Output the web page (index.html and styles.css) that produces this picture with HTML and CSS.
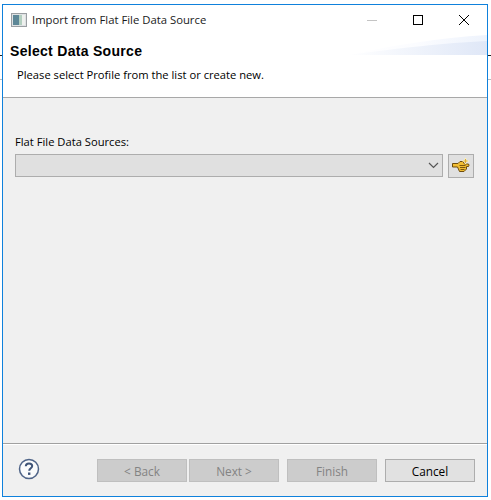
FILE: index.html
```html
<!DOCTYPE html>
<html lang="en">
<head>
<meta charset="utf-8">
<title>Import from Flat File Data Source</title>
<link rel="stylesheet" href="styles.css">
</head>
<body>
<span class="stub stub-dark stub-left"></span>
<span class="stub stub-gray stub-left"></span>
<span class="stub stub-dark stub-right"></span>
<span class="stub stub-gray stub-right"></span>
<div class="window">
  <div class="titlebar">
    <svg class="app-icon" width="16" height="14" viewBox="0 0 16 14">
      <rect x="0.5" y="0.5" width="15" height="13" fill="#dfe2e4" stroke="#9a9ea2"/>
      <rect x="2" y="2" width="6" height="10" fill="#5d8797"/>
      <rect x="8" y="2" width="3" height="10" fill="#b3cfc0"/>
      <rect x="11" y="2" width="3" height="10" fill="#eef0ee"/>
    </svg>
    <span class="title">Import from Flat File Data Source</span>
    <div class="controls">
      <span class="ctl"><svg width="12" height="12" viewBox="0 0 12 12"><path d="M1 6.5H11" stroke="#c4c4c4" fill="none"/></svg></span>
      <span class="ctl"><svg width="12" height="12" viewBox="0 0 12 12"><rect x="1.5" y="1.5" width="9" height="9" stroke="#000" fill="none"/></svg></span>
      <span class="ctl"><svg width="12" height="12" viewBox="0 0 12 12"><path d="M1 1L11 11M11 1L1 11" stroke="#000" fill="none"/></svg></span>
    </div>
  </div>
  <div class="banner">
    <svg class="banner-art" width="140" height="20" viewBox="0 0 140 20">
      <defs>
        <linearGradient id="bg" x1="0" y1="0" x2="1" y2="0">
          <stop offset="0" stop-color="#fff"/>
          <stop offset="1" stop-color="#dfe7f7"/>
        </linearGradient>
        <linearGradient id="bg2" x1="0" y1="0" x2="1" y2="0">
          <stop offset="0" stop-color="#fff"/>
          <stop offset="0.5" stop-color="#fbfcff"/>
          <stop offset="1" stop-color="#eef3fc"/>
        </linearGradient>
      </defs>
      <path d="M0 20C50 10 90 3 140 0V20Z" fill="url(#bg2)"/>
      <path d="M0 20C55 13 95 8 140 6V20Z" fill="url(#bg)"/>
    </svg>
    <h1 class="heading">Select Data Source</h1>
    <p class="desc">Please select Profile from the list or create new.</p>
  </div>
  <div class="content">
    <label class="field-label">Flat File Data Sources:</label>
    <div class="field-row">
      <div class="combo">
        <svg width="11" height="7" viewBox="0 0 11 7"><path d="M1 1L5.5 5.5L10 1" stroke="#555" stroke-width="1.2" fill="none"/></svg>
      </div>
      <button class="pick" type="button" aria-label="Create new">
        <svg width="18" height="16" viewBox="0 0 18 16">
          <path d="M0.500 5.500H6L8 3.500H11L12.500 6H16.500Q17.500 7 16.500 8.500H14.500V11L12 13.500H7.500L5.500 9H0.500Z" fill="#f1bd33" stroke="#6e4c0c"/>
          <path d="M7.500 7.500H13.500M8 9.500H13.500M8.500 11.500H12.500" stroke="#7c570f" fill="none"/>
          <path d="M13.500 0V6M10.500 3H16.500" stroke="#fff3b8" stroke-width="1.500"/>
          <path d="M13.500 1V5M11.500 3H15.500" stroke="#dfae35"/>
        </svg>
      </button>
    </div>
  </div>
  <div class="footer">
    <svg class="help" width="22" height="22" viewBox="0 0 22 22">
      <circle cx="11" cy="11" r="9.500" fill="#fafbfc" stroke="#4f6488" stroke-width="1.500"/>
      <path d="M7.800 8.300C7.800 6.300 9.300 5.500 11 5.500C12.800 5.500 14.200 6.500 14.200 8.100C14.200 10.300 11.200 10.300 11.200 12.800" stroke="#3f5478" stroke-width="2" fill="none"/>
      <rect x="10" y="14.500" width="2.400" height="2.400" fill="#3f5478"/>
    </svg>
    <div class="buttons">
      <button class="btn" type="button" disabled>&lt; Back</button>
      <button class="btn" type="button" disabled>Next &gt;</button>
      <button class="btn btn-finish" type="button" disabled>Finish</button>
      <button class="btn btn-cancel" type="button">Cancel</button>
    </div>
  </div>
</div>
</body>
</html>
```
FILE: styles.css
```css
* { box-sizing: border-box; }
html, body { margin: 0; height: 100%; background: #fff; }
body {
  padding: 4px 0 0 2px;
  overflow: hidden;
  position: relative;
  font-family: "Open Sans", "Noto Sans", sans-serif;
  font-size: 12px;
  color: #000;
}
.stub { position: absolute; height: 1px; width: 2px; }
.stub-dark { top: 55px; background: #222; }
.stub-gray { top: 79px; background: #bbb; }
.stub-left { left: 0; }
.stub-right { left: 488px; width: 3px; }
.window {
  width: 486px;
  height: 493px;
  border: 1px solid #0f81dc;
  background: #fff;
  display: flex;
  flex-direction: column;
  position: relative;
}
.titlebar {
  height: 30px;
  display: flex;
  align-items: center;
  padding-left: 8px;
  flex: none;
}
.app-icon { flex: none; }
.title { margin: 0 0 2px 5px; font-size: 11.300px; color: #1a1a1a; }
.controls { margin-left: auto; display: flex; height: 30px; }
.ctl { width: 46px; display: flex; align-items: center; justify-content: center; }
.banner { position: relative; height: 62px; flex: none; padding: 0 7px; }
.banner-art { position: absolute; right: 0; top: 0; }
.heading {
  margin: 0;
  font-family: "Liberation Sans", sans-serif;
  font-size: 14px;
  font-weight: 700;
  line-height: 18px;
  padding-top: 7px;
  letter-spacing: 0.3px;
}
.desc { margin: 7px 0 0 7px; font-size: 11.200px; line-height: 16px; }
.content {
  flex: 1;
  background: #f0f0f0;
  border-top: 1px solid #a8a8a8;
  border-bottom: 1px solid #a0a0a0;
  padding: 36px 12px 0;
}
.field-label { display: block; font-size: 11.200px; line-height: 16px; }
.field-row { display: flex; gap: 5px; margin-top: 4px; align-items: flex-start; }
.combo {
  width: 428px;
  height: 23px;
  background: #e0e0e0;
  border: 1px solid #adadad;
  display: flex;
  align-items: center;
  justify-content: flex-end;
  padding-right: 3px;
}
.pick {
  width: 26px;
  height: 24px;
  padding: 0;
  background: #e0e0e0;
  border: 1px solid #adadad;
  display: flex;
  align-items: center;
  justify-content: center;
}
.footer {
  height: 51px;
  flex: none;
  margin-top: 1px;
  background: #f0f0f0;
  display: flex;
  align-items: flex-start;
  padding: 14px 12px 0 15px;
}
.help { margin-top: -1px; flex: none; }
.buttons { margin-left: auto; display: flex; gap: 2px; }
.btn {
  width: 90px;
  height: 23px;
  padding: 0;
  font: 11.800px "Open Sans", "Noto Sans", sans-serif;
  background: #cccccc;
  border: 1px solid #bfbfbf;
  color: #838383;
}
.btn-finish { margin-left: 6px; }
.btn-cancel {
  margin-left: 6px;
  background: #e1e1e1;
  border-color: #adadad;
  color: #000;
}
```
